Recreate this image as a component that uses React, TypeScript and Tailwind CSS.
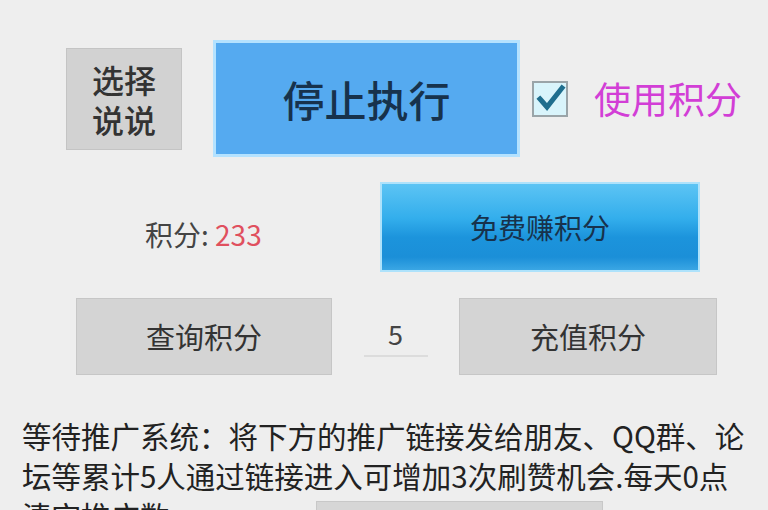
export default function App() {
  return (
    <div
      className="w-[768px] h-[510px] overflow-hidden bg-[#eeeeee] pt-[40px] text-[#222222]"
      style={{ fontFamily: '"Noto Sans CJK SC", "Noto Sans", sans-serif' }}
    >
      {/* top row */}
      <div className="flex items-center pl-[66px]">
        <button className="w-[116px] h-[102px] bg-[#d2d2d2] border border-[#c4c4c4] flex flex-col items-center justify-center text-[32px] leading-[40px] font-medium text-[#333333]">
          <span>选择</span>
          <span>说说</span>
        </button>
        <button className="ml-[31px] w-[307px] h-[117px] bg-[#55aaf0] border-[3px] border-[#b4e2ff] flex items-center justify-center text-[42px] font-medium text-[#17324c]">
          停止执行
        </button>
        <div className="ml-[12px] w-[36px] h-[36px] bg-[#d9f4fb] border-2 border-[#9aa4a8] flex items-center justify-center">
          <svg width="32" height="30" viewBox="0 0 32 30">
            <path d="M6 15 L13 23 L28 4" fill="none" stroke="#1f6e8e" strokeWidth="5" strokeLinecap="square" />
          </svg>
        </div>
        <span className="ml-[26px] text-[37px] text-[#d23ed6]">使用积分</span>
      </div>

      {/* points row */}
      <div className="flex items-center mt-[25px]">
        <div className="w-[380px] pl-[145px] pt-[14px] text-[28px] text-[#444444]">
          积分: <span className="text-[#e0505e]">233</span>
        </div>
        <button className="w-[320px] h-[90px] border-2 border-[#aee2fb] bg-[linear-gradient(180deg,#5cc4f4_0%,#33aeec_40%,#1c94dc_62%,#1b8fd8_85%,#3aa6e4_100%)] flex items-center justify-center text-[28px] text-[#17324c]">
          免费赚积分
        </button>
      </div>

      {/* query / recharge row */}
      <div className="flex items-center mt-[26px] pl-[76px]">
        <button className="w-[256px] h-[77px] bg-[#d4d4d4] border border-[#c6c6c6] flex items-center justify-center text-[29px] text-[#333333]">
          查询积分
        </button>
        <div className="w-[127px] flex flex-col items-center pt-[2px]">
          <span className="text-[27px] leading-[30px] text-[#444444]">5</span>
          <div className="mt-[6px] w-[64px] h-[2px] bg-[#dcdcdc]" />
        </div>
        <button className="w-[258px] h-[77px] bg-[#d4d4d4] border border-[#c6c6c6] flex items-center justify-center text-[29px] text-[#333333]">
          充值积分
        </button>
      </div>

      {/* promo text */}
      <div className="mt-[40px] pl-[22px] text-[29.5px] leading-[40px] text-[#222222] whitespace-nowrap">
        <div>等待推广系统：将下方的推广链接发给朋友、QQ群、论</div>
        <div>坛等累计5人通过链接进入可增加3次刷赞机会.每天0点</div>
        <div className="flex items-start">
          <span>清空推广数</span>
          <div className="ml-[146px] mt-[6px] w-[287px] h-[40px] bg-[#d6d6d6] border border-[#c8c8c8]" />
        </div>
      </div>
    </div>
  );
}
